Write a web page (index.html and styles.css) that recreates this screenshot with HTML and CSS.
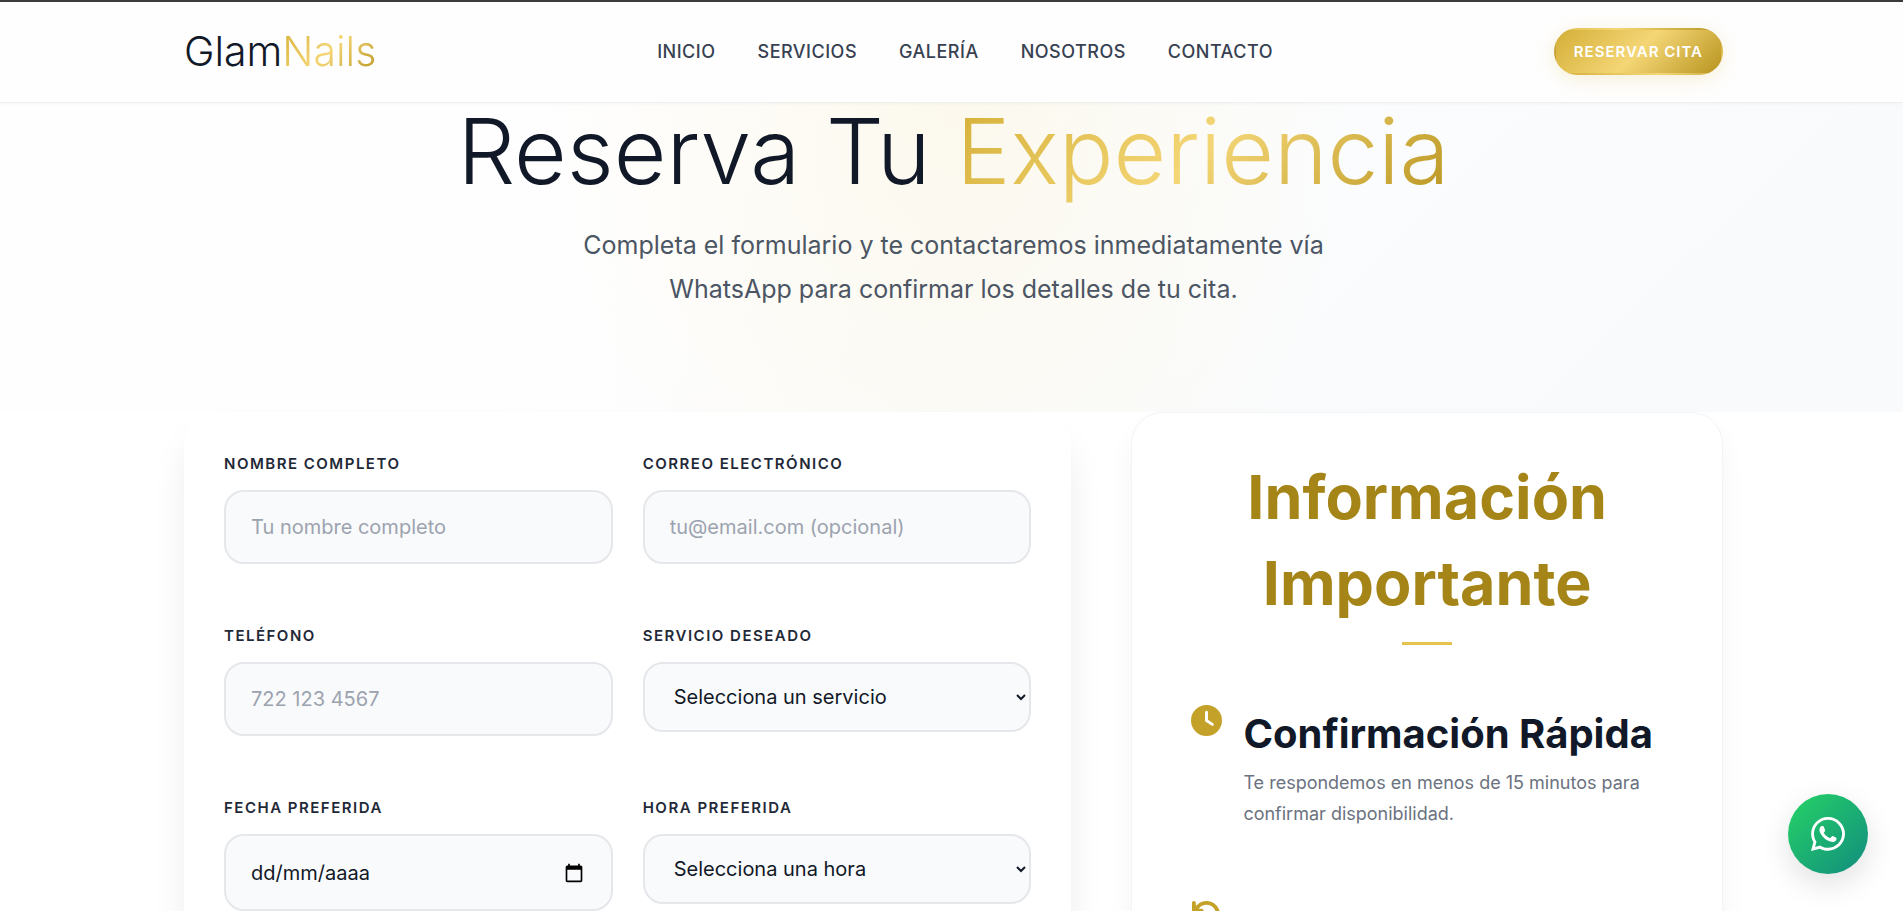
FILE: index.html
```html
<!DOCTYPE html>
<html lang="es">
<head>
<meta charset="utf-8">
<meta name="viewport" content="width=device-width, initial-scale=1">
<title>GlamNails - Reserva Tu Experiencia</title>
<link rel="stylesheet" href="styles.css">
</head>
<body>
<header class="header">
  <div class="container header-row">
    <a class="logo" href="#">Glam<span class="gold-text">Nails</span></a>
    <nav class="nav">
      <a href="#inicio">INICIO</a>
      <a href="#servicios">SERVICIOS</a>
      <a href="#galeria">GALERÍA</a>
      <a href="#nosotros">NOSOTROS</a>
      <a href="#contacto">CONTACTO</a>
    </nav>
    <a class="cta" href="#reservar">RESERVAR CITA</a>
  </div>
</header>
<main>
  <section class="hero">
    <div class="container">
      <h1 class="hero-title">Reserva Tu <span class="gold-text">Experiencia</span></h1>
      <p class="hero-text">Completa el formulario y te contactaremos inmediatamente vía WhatsApp para confirmar los detalles de tu cita.</p>
    </div>
  </section>
  <section class="container booking" id="reservar">
    <form class="form-card">
      <div class="field">
        <label for="nombre">NOMBRE COMPLETO</label>
        <input class="control" id="nombre" type="text" placeholder="Tu nombre completo">
      </div>
      <div class="field">
        <label for="correo">CORREO ELECTRÓNICO</label>
        <input class="control" id="correo" type="email" placeholder="tu@email.com (opcional)">
      </div>
      <div class="field">
        <label for="telefono">TELÉFONO</label>
        <input class="control" id="telefono" type="tel" placeholder="722 123 4567">
      </div>
      <div class="field">
        <label for="servicio">SERVICIO DESEADO</label>
        <select class="control select" id="servicio"><option>Selecciona un servicio</option></select>
      </div>
      <div class="field">
        <label for="fecha">FECHA PREFERIDA</label>
        <div class="control date">
          <input class="date-input" id="fecha" type="text" placeholder="dd/mm/aaaa">
          <button class="date-button" type="button" aria-label="Abrir calendario">
            <svg viewBox="0 0 24 24" width="20" height="20"><path fill="#000" d="M20 3h-1V1h-2v2H7V1H5v2H4c-1.100 0-2 .9-2 2v16c0 1.100.9 2 2 2h16c1.100 0 2-.9 2-2V5c0-1.100-.9-2-2-2zm0 18H4V8h16v13z"/></svg>
          </button>
        </div>
      </div>
      <div class="field">
        <label for="hora">HORA PREFERIDA</label>
        <select class="control select" id="hora"><option>Selecciona una hora</option></select>
      </div>
    </form>
    <aside class="info-card">
      <h2 class="info-title">Información Importante</h2>
      <ul class="info-list">
        <li class="info-item">
          <svg class="info-icon" viewBox="0 0 512 512"><path d="M256 0a256 256 0 1 1 0 512A256 256 0 1 1 256 0zM232 120l0 136c0 8 4 15.500 10.700 20l96 64c11 7.400 25.900 4.400 33.300-6.700s4.400-25.900-6.700-33.300L280 243.200 280 120c0-13.300-10.700-24-24-24s-24 10.700-24 24z"/></svg>
          <div>
            <h3 class="item-title">Confirmación Rápida</h3>
            <p class="item-text">Te respondemos en menos de 15 minutos para confirmar disponibilidad.</p>
          </div>
        </li>
        <li class="info-item">
          <svg class="info-icon" viewBox="0 0 512 512"><path d="M125.700 160l50.300 0c17.700 0 32 14.300 32 32s-14.300 32-32 32L48 224c-17.700 0-32-14.300-32-32L16 64c0-17.700 14.300-32 32-32s32 14.300 32 32l0 51.200L97.600 97.600c87.500-87.500 229.300-87.500 316.800 0s87.500 229.300 0 316.800s-229.300 87.500-316.800 0c-12.500-12.500-12.500-32.800 0-45.300s32.800-12.500 45.300 0c62.500 62.500 163.800 62.500 226.300 0s62.500-163.800 0-226.300s-163.800-62.500-226.300 0L125.700 160z"/></svg>
        </li>
      </ul>
    </aside>
  </section>
</main>
<a class="whatsapp" href="#whatsapp" aria-label="WhatsApp">
  <svg viewBox="0 32 448 448" width="34" height="34"><path fill="#fff" d="M380.900 97.100C339 55.100 283.200 32 223.900 32c-122.400 0-222 99.600-222 222 0 39.100 10.200 77.300 29.600 111L0 480l117.700-30.900c32.400 17.700 68.900 27 106.100 27h.1c122.300 0 224.100-99.600 224.100-222 0-59.300-25.200-115-67.100-157zm-157 341.600c-33.200 0-65.700-8.900-94-25.700l-6.700-4-69.800 18.300L72 359.200l-4.400-7c-18.500-29.400-28.200-63.300-28.200-98.200 0-101.700 82.800-184.500 184.600-184.500 49.300 0 95.600 19.200 130.400 54.100 34.800 34.900 56.200 81.200 56.100 130.500 0 101.800-84.900 184.600-186.600 184.600zm101.200-138.200c-5.500-2.800-32.800-16.200-37.900-18-5.100-1.900-8.800-2.800-12.500 2.800-3.700 5.600-14.300 18-17.600 21.800-3.200 3.700-6.500 4.200-12 1.400-32.600-16.300-54-29.100-75.500-66-5.700-9.800 5.700-9.100 16.300-30.300 1.800-3.700.9-6.900-.5-9.700-1.400-2.800-12.500-30.100-17.100-41.200-4.500-10.800-9.100-9.300-12.500-9.500-3.200-.2-6.900-.2-10.600-.2-3.700 0-9.700 1.400-14.800 6.900-5.100 5.600-19.400 19-19.400 46.300 0 27.300 19.900 53.700 22.600 57.400 2.800 3.700 39.100 59.700 94.800 83.800 35.200 15.200 49 16.500 66.600 13.900 10.700-1.600 32.800-13.400 37.400-26.400 4.600-13 4.600-24.100 3.200-26.400-1.300-2.500-5-3.900-10.500-6.600z"/></svg>
</a>
</body>
</html>
```

FILE: styles.css
```css
* { box-sizing: border-box; }

:root {
  --gold: linear-gradient(135deg, #d4af37 0%, #f4d676 50%, #b8941f 100%);
}

body {
  margin: 0;
  background: #fff;
  color: #111827;
  font-family: "Inter", "Liberation Sans", sans-serif;
  font-size: 18px;
  overflow-x: hidden;
}

h1, h2, h3, p, ul { margin: 0; padding: 0; }

a { color: inherit; text-decoration: none; }

.container {
  max-width: 1543px;
  margin: 0 auto;
  padding-left: 4px;
}

.gold-text {
  background: var(--gold);
  background-clip: text;
  -webkit-background-clip: text;
  color: transparent;
}

.header {
  border-top: 2px solid #3c3a3b;
  border-bottom: 1px solid #f0f0f0;
  background: #fefefe;
  box-shadow: 0 1px 3px rgba(0, 0, 0, 0.03);
  position: relative;
}

.header-row {
  display: flex;
  align-items: center;
  justify-content: space-between;
  height: 100px;
  padding-bottom: 2px;
}

.logo {
  font-size: 41px;
  font-weight: 300;
  line-height: 60px;
}

.nav {
  display: flex;
  gap: 42px;
  color: #374151;
  font-weight: 500;
  letter-spacing: 0.5px;
}

.cta {
  padding: 12px 18px;
  border: 2px solid transparent;
  border-radius: 24px;
  background: var(--gold);
  box-shadow: 0 4px 20px rgba(212, 175, 55, 0.2);
  color: #fff;
  font-size: 15px;
  font-weight: 600;
  line-height: 19px;
  letter-spacing: 1px;
}

.hero {
  padding: 0 0 101px;
  background:
    radial-gradient(ellipse 400px 560px at 50% 0, rgba(244, 214, 118, 0.12), transparent),
    linear-gradient(135deg, #fefefe 0%, #fefefe 35%, #f8fafc 90%);
  text-align: center;
}

.hero-title {
  font-size: 91px;
  font-weight: 350;
  line-height: 96px;
}

.hero-text {
  max-width: 820px;
  margin: 24px auto 0;
  color: #4b5563;
  font-size: 25px;
  line-height: 44px;
}

.booking {
  display: grid;
  grid-template-columns: minmax(0, 3fr) minmax(0, 2fr);
  gap: 60px;
}

.form-card {
  display: grid;
  grid-template-columns: minmax(0, 1fr) minmax(0, 1fr);
  align-content: start;
  gap: 60px 30px;
  padding: 40px;
  border-radius: 32px;
  background: #fff;
  box-shadow: 0 25px 40px -8px rgba(0, 0, 0, 0.11);
}

.field {
  display: flex;
  flex-direction: column;
  gap: 14px;
}

.field label {
  color: #1f2937;
  font-size: 15px;
  font-weight: 600;
  line-height: 24px;
  letter-spacing: 1.5px;
}

.control {
  width: 100%;
  height: 74px;
  padding: 0 25px;
  border: 2px solid #e5e7eb;
  border-radius: 20px;
  background: #f9fafb;
  color: #111827;
  font-family: inherit;
  font-size: 20px;
}

.control::placeholder { color: #9ca3af; }

.select { height: 70px; padding-right: 0; }

.date {
  display: flex;
  align-items: center;
  justify-content: space-between;
  height: 77px;
}

.date-input {
  min-width: 0;
  flex: 1;
  padding: 0;
  border: 0;
  background: transparent;
  color: inherit;
  font: inherit;
}

.date-input::placeholder { color: #111827; }

.date-button {
  display: flex;
  padding: 2px;
  border: 0;
  background: transparent;
}

.info-card {
  padding: 41px 59px;
  border: 1px solid #f3f4f6;
  border-radius: 32px;
  background: #fff;
  box-shadow: 0 14px 30px -4px rgba(0, 0, 0, 0.06);
}

.info-title {
  color: #a58517;
  font-size: 61px;
  font-weight: 700;
  line-height: 86px;
  text-align: center;
}

.info-title::after {
  content: "";
  display: block;
  width: 50px;
  height: 3px;
  margin: 16px auto 0;
  background: #e5c34e;
}

.info-list {
  margin-top: 60px;
  list-style: none;
}

.info-item {
  display: flex;
  gap: 21px;
  margin-bottom: 70px;
}

.info-icon {
  flex: none;
  width: 31px;
  height: 31px;
  fill: #c4a128;
}

.item-title {
  font-size: 40px;
  font-weight: 700;
  line-height: 58px;
  white-space: nowrap;
}

.item-text {
  margin-top: 4px;
  color: #6b7280;
  line-height: 31px;
}

.whatsapp {
  position: fixed;
  right: 35px;
  bottom: 37px;
  display: flex;
  align-items: center;
  justify-content: center;
  width: 80px;
  height: 80px;
  border-radius: 50%;
  background: linear-gradient(135deg, #25d366, #128c7e);
  box-shadow: 0 10px 30px rgba(0, 0, 0, 0.12);
}
```
